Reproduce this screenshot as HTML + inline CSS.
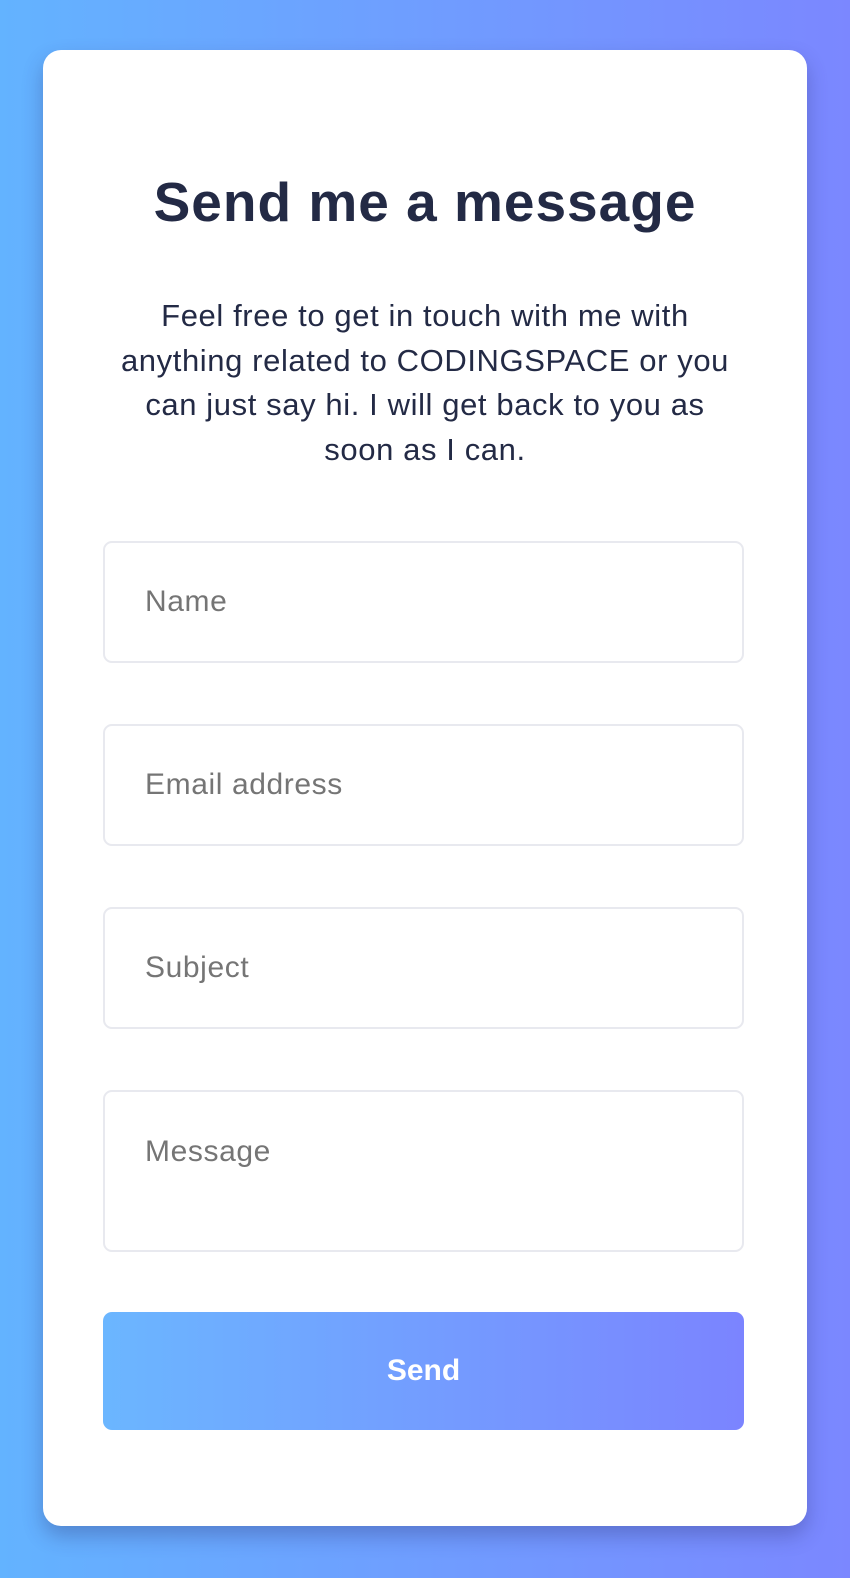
<!DOCTYPE html>
<html><head><meta charset="utf-8"><style>
html,body{margin:0;padding:0;width:850px;height:1578px;overflow:hidden}
body{background:linear-gradient(90deg,#63b3ff 0%,#7b87ff 100%);font-family:"Liberation Sans",sans-serif}
.card{position:absolute;left:43px;top:50px;width:764px;height:1476px;background:#fff;border-radius:18px;box-shadow:0 10px 20px rgba(40,40,100,.3)}
h1{position:absolute;top:120px;left:0;width:100%;text-align:center;margin:0;font-size:55px;line-height:64px;font-weight:bold;color:#232a45;letter-spacing:1px}
p{position:absolute;top:244px;left:72px;width:620px;text-align:center;margin:0;font-size:31px;line-height:44.5px;color:#232a45;letter-spacing:0.6px}
.f{position:absolute;left:60px;width:641px;border:2px solid #e8e9ef;border-radius:9px;box-sizing:border-box;font-size:30px;letter-spacing:0.6px;color:#757575;padding-left:40px}
.btn{position:absolute;left:60px;top:1262px;width:641px;height:118px;border-radius:9px;background:linear-gradient(90deg,#6bb6ff,#7b84ff);color:#fff;font-weight:bold;font-size:30px;text-align:center;line-height:118px}
</style></head><body><div class="card">
<h1>Send me a message</h1>
<p>Feel free to get in touch with me with anything related to CODINGSPACE or you can just say hi. I will get back to you as soon as I can.</p>
<div class="f" style="top:491px;height:122px;line-height:118px">Name</div>
<div class="f" style="top:674px;height:122px;line-height:118px">Email address</div>
<div class="f" style="top:857px;height:122px;line-height:118px">Subject</div>
<div class="f" style="top:1040px;height:162px;padding-top:40px;line-height:40px">Message</div>
<div class="btn">Send</div>
</div></body></html>
